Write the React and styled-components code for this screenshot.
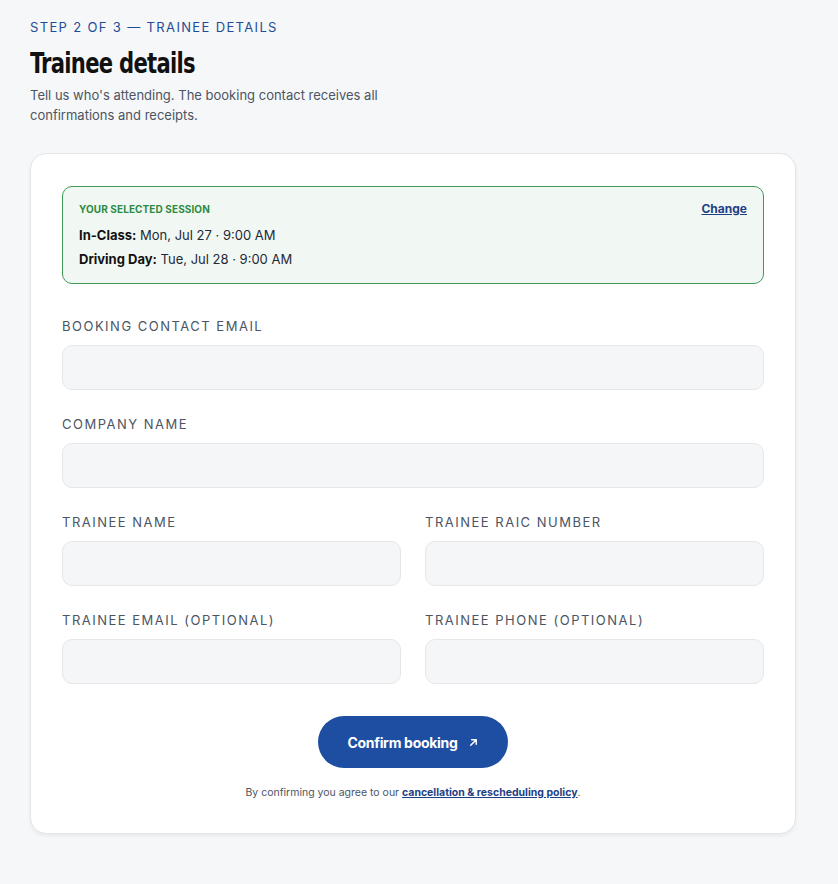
import React from "react";
import styled, { createGlobalStyle } from "styled-components";

const GlobalStyle = createGlobalStyle`
  html, body {
    margin: 0;
    padding: 0;
    background: #f6f7f9;
  }
  body {
    font-family: "Inter", "Noto Sans", sans-serif;
    color: #111827;
  }
  * { box-sizing: border-box; }
`;

const Page = styled.div`
  padding: 18px 30px 50px 30px;
`;

const Header = styled.header`
  display: flex;
  flex-direction: column;
  align-items: flex-start;
`;

const StepLabel = styled.div`
  font-size: 13px;
  letter-spacing: 1.35px;
  color: #1f4c96;
  line-height: 18px;
`;

// condensed display face: squeeze DejaVu Condensed a bit further
const Title = styled.h1`
  margin: 10px 0 5px 0;
  font-family: "DejaVu Sans Condensed", "DejaVu Sans", sans-serif;
  font-stretch: condensed;
  font-weight: 700;
  font-size: 29px;
  line-height: 34px;
  letter-spacing: -0.9px;
  color: #111111;
  transform: scaleX(0.81);
  transform-origin: left center;
`;

const Lead = styled.p`
  margin: 0;
  max-width: 380px;
  font-size: 13px;
  line-height: 20px;
  color: #4b5563;
`;

const Card = styled.section`
  margin-top: 28px;
  width: 766px;
  background: #ffffff;
  border: 1px solid #e3e5e9;
  border-radius: 16px;
  box-shadow: 0 2px 4px rgba(17, 24, 39, 0.06);
  padding: 32px 31px 33px 31px;
  display: flex;
  flex-direction: column;
`;

const Session = styled.div`
  border: 1px solid #3f9a55;
  background: #f1f8f3;
  border-radius: 10px;
  padding: 14px 16px 12px 16px;
  display: flex;
  justify-content: space-between;
  align-items: flex-start;
`;

const SessionInfo = styled.div`
  display: flex;
  flex-direction: column;
`;

const SessionHeading = styled.div`
  font-size: 10px;
  font-weight: 700;
  letter-spacing: 0.1px;
  color: #2e8a43;
  line-height: 16px;
  margin-bottom: 6px;
`;

const SessionLine = styled.div`
  font-size: 13px;
  line-height: 24px;
  color: #1f2937;

  b {
    font-weight: 700;
    color: #111111;
  }
`;

const ChangeLink = styled.a`
  font-size: 12px;
  font-weight: 700;
  color: #1f3f85;
  text-decoration: underline;
  cursor: pointer;
  line-height: 16px;
`;

const Fields = styled.div`
  display: flex;
  flex-direction: column;
  gap: 25px;
  margin-top: 33px;
`;

const Row = styled.div`
  display: grid;
  grid-template-columns: ${(p) => (p.$split ? "1fr 1fr" : "1fr")};
  gap: 24px;
`;

const Field = styled.label`
  display: flex;
  flex-direction: column;
  gap: 10px;
`;

const Label = styled.span`
  font-size: 13px;
  letter-spacing: 1.5px;
  color: #4b5563;
  line-height: 18px;
`;

const Input = styled.input`
  height: 45px;
  width: 100%;
  border: 1px solid #e5e7eb;
  background: #f5f6f8;
  border-radius: 10px;
  padding: 0 14px;
  font-family: inherit;
  font-size: 14px;
  outline: none;
`;

const Actions = styled.div`
  display: flex;
  flex-direction: column;
  align-items: center;
  margin-top: 32px;
  gap: 18px;
`;

const PrimaryButton = styled.button`
  width: 190px;
  height: 52px;
  border: none;
  border-radius: 26px;
  background: #1d4ea1;
  color: #ffffff;
  font-family: inherit;
  font-size: 14px;
  font-weight: 700;
  letter-spacing: -0.3px;
  display: flex;
  align-items: center;
  justify-content: center;
  gap: 10px;
  cursor: pointer;
`;

const Legal = styled.p`
  margin: 0;
  font-size: 10.5px;
  line-height: 14px;
  color: #4b5563;

  a {
    color: #1f3f85;
    font-weight: 700;
    text-decoration: underline;
  }
`;

function ArrowIcon() {
  return (
    <svg width="11" height="11" viewBox="0 0 12 12" fill="none">
      <path d="M3 9L9 3M4 3h5v5" stroke="#fff" strokeWidth="1.6" strokeLinecap="round" strokeLinejoin="round" />
    </svg>
  );
}

export default function App() {
  return (
    <>
      <GlobalStyle />
      <Page>
        <Header>
          <StepLabel>STEP 2 OF 3 — TRAINEE DETAILS</StepLabel>
          <Title>Trainee details</Title>
          <Lead>
            Tell us who's attending. The booking contact receives all confirmations and receipts.
          </Lead>
        </Header>

        <Card>
          <Session>
            <SessionInfo>
              <SessionHeading>YOUR SELECTED SESSION</SessionHeading>
              <SessionLine>
                <b>In-Class:</b> Mon, Jul 27 · 9:00 AM
              </SessionLine>
              <SessionLine>
                <b>Driving Day:</b> Tue, Jul 28 · 9:00 AM
              </SessionLine>
            </SessionInfo>
            <ChangeLink>Change</ChangeLink>
          </Session>

          <Fields>
            <Row>
              <Field>
                <Label>BOOKING CONTACT EMAIL</Label>
                <Input type="email" />
              </Field>
            </Row>
            <Row>
              <Field>
                <Label>COMPANY NAME</Label>
                <Input type="text" />
              </Field>
            </Row>
            <Row $split>
              <Field>
                <Label>TRAINEE NAME</Label>
                <Input type="text" />
              </Field>
              <Field>
                <Label>TRAINEE RAIC NUMBER</Label>
                <Input type="text" />
              </Field>
            </Row>
            <Row $split>
              <Field>
                <Label>TRAINEE EMAIL (OPTIONAL)</Label>
                <Input type="email" />
              </Field>
              <Field>
                <Label>TRAINEE PHONE (OPTIONAL)</Label>
                <Input type="tel" />
              </Field>
            </Row>
          </Fields>

          <Actions>
            <PrimaryButton>
              Confirm booking <ArrowIcon />
            </PrimaryButton>
            <Legal>
              By confirming you agree to our <a>cancellation &amp; rescheduling policy</a>.
            </Legal>
          </Actions>
        </Card>
      </Page>
    </>
  );
}
